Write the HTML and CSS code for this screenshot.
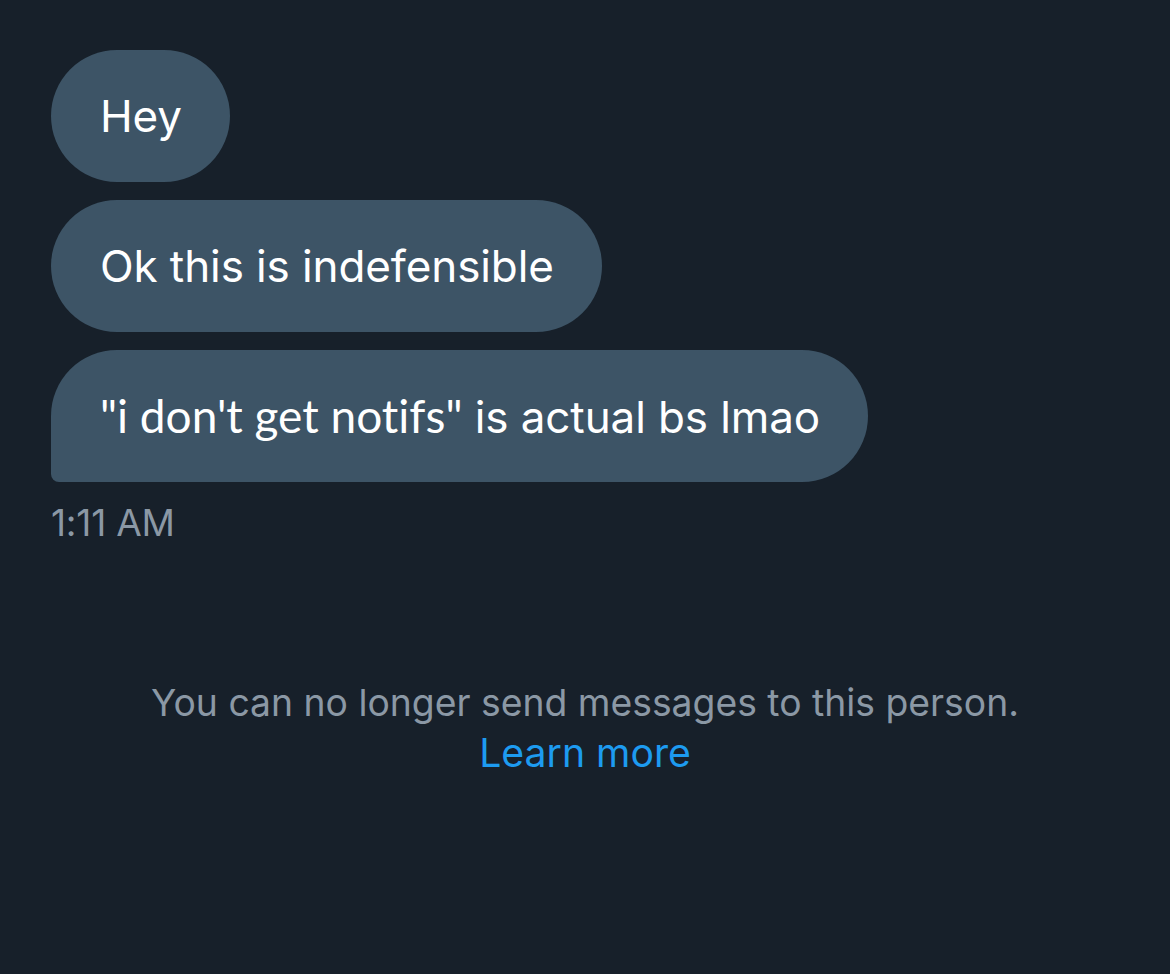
FILE: index.html
```html
<!DOCTYPE html>
<html>
<head>
<meta charset="utf-8">
<link rel="stylesheet" href="styles.css">
</head>
<body>
<div class="page">
  <div class="thread">
    <div class="bubble"><span class="msg">Hey</span></div>
    <div class="bubble"><span class="msg">Ok this is indefensible</span></div>
    <div class="bubble last"><span class="msg"><span class="alt">"i don't get notifs"</span> is actual bs lmao</span></div>
  </div>
  <div class="time">1:11 AM</div>
  <div class="notice">
    <div class="notice-text">You can no longer send messages to this person.</div>
    <a class="learn" href="#">Learn more</a>
  </div>
</div>
</body>
</html>
```
FILE: styles.css
```css
html, body {
  margin: 0;
  padding: 0;
  background: #17202a;
}
body {
  font-family: Inter, "Liberation Sans", sans-serif;
  width: 1170px;
  height: 974px;
  overflow: hidden;
}
.page {
  padding: 50px 0 0 51px;
  display: flex;
  flex-direction: column;
}
.thread {
  display: flex;
  flex-direction: column;
  align-items: flex-start;
  gap: 18px;
}
.bubble {
  background: #3d5466;
  color: #ffffff;
  height: 132px;
  box-sizing: border-box;
  padding: 0 48px 0 49px;
  border-radius: 66px;
  display: flex;
  align-items: center;
  font-size: 44px;
  letter-spacing: -0.1px;
  white-space: nowrap;
}
.msg {
  white-space: pre;
}
.bubble.last {
  border-bottom-left-radius: 8px;
}
.alt {
  font-family: Lato, Inter, sans-serif;
  font-size: 46px;
  letter-spacing: 0;
  font-variant-ligatures: none;
}
.time {
  margin-top: 22px;
  color: #8b98a5;
  font-size: 37px;
  letter-spacing: -0.2px;
  line-height: 38px;
}
.notice {
  margin-top: 136px;
  margin-left: -51px;
  display: flex;
  flex-direction: column;
  align-items: center;
  font-size: 37.3px;
  line-height: 50px;
}
.notice-text {
  color: #8b98a5;
}
.learn {
  color: #1d9bf0;
  text-decoration: none;
  font-size: 39.2px;
}
```
